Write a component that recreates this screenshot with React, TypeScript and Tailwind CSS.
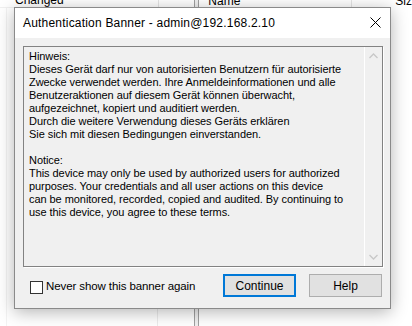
export default function App() {
  const hinweis = [
    "Hinweis:",
    "Dieses Gerät darf nur von autorisierten Benutzern für autorisierte",
    "Zwecke verwendet werden. Ihre Anmeldeinformationen und alle",
    "Benutzeraktionen auf diesem Gerät können überwacht,",
    "aufgezeichnet, kopiert und auditiert werden.",
    "Durch die weitere Verwendung dieses Geräts erklären",
    "Sie sich mit diesen Bedingungen einverstanden.",
    "",
    "Notice:",
    "This device may only be used by authorized users for authorized",
    "purposes. Your credentials and all user actions on this device",
    "can be monitored, recorded, copied and audited. By continuing to",
    "use this device, you agree to these terms.",
  ];

  return (
    <div className="relative w-[412px] h-[326px] overflow-hidden bg-white font-['Liberation_Sans',sans-serif] text-black">
      {/* Background file panels */}
      <div className="flex h-full">
        {/* Left panel */}
        <div className="w-[199px] h-full flex flex-col">
          <div className="flex h-[8px] items-end border-b border-[#f0f0f0] text-[12px] leading-none">
            <div className="w-[159px] h-full border-r border-[#e5e5e5] pl-[15px] pb-[1px] flex items-end">
              Changed
            </div>
            <div className="flex-1"></div>
          </div>
          <div className="flex-1 flex">
            <div className="w-[7px] border-r border-[#f3f3f3]"></div>
            <div className="w-[151px] border-r border-[#ececec]"></div>
          </div>
        </div>
        {/* Splitter */}
        <div className="w-[5px] h-full bg-[#f0f0f0] border-l border-r border-[#a0a0a0]"></div>
        {/* Right panel */}
        <div className="flex-1 h-full flex flex-col">
          <div className="flex h-[8px] text-[12px] leading-none">
            <div className="w-[153px] h-full border-r border-[#e5e5e5] pl-[9px] pb-[1px] flex items-end">
              Name
            </div>
            <div className="flex-1 pl-[43px] pb-[1px] flex items-end">Siz</div>
          </div>
          <div className="flex-1"></div>
        </div>
      </div>

      {/* Dialog */}
      <div className="absolute left-[14px] top-[7px] w-[377px] h-[302px] border border-[#8a8a8a] bg-[#f0f0f0] flex flex-col shadow-[0_3px_16px_rgba(0,0,0,0.3)]">
        {/* Title bar */}
        <div className="h-[30px] bg-white flex items-center justify-between pl-[8px] pr-[9px]">
          <span className="text-[12px] tracking-[0.2px]">
            Authentication Banner - admin@192.168.2.10
          </span>
          <svg width="11" height="11" viewBox="0 0 11 11" className="mt-[-1px]">
            <path d="M0.5 0.5 L10.5 10.5 M10.5 0.5 L0.5 10.5" stroke="#000" strokeWidth="1" />
          </svg>
        </div>

        {/* Body */}
        <div className="flex-1 flex flex-col pl-[8px] pr-[7px] pt-[8px]">
          {/* Banner text box */}
          <div className="h-[221px] border border-[#828282] shadow-[1px_1px_0_#ffffff] flex">
            <div className="flex-1 pl-[5px] pt-[3px] text-[11px] leading-[13px] tracking-[-0.06px] whitespace-pre">
              {hinweis.map((line, i) => (
                <div key={i} className="h-[13px]">
                  {line}
                </div>
              ))}
            </div>
            <div className="w-[18px] border-l border-white flex flex-col items-center justify-between py-[6px]">
              <svg width="9" height="6" viewBox="0 0 9 6">
                <path d="M0.5 5 L4.5 1 L8.5 5" stroke="#c8c8c8" strokeWidth="1.3" fill="none" />
              </svg>
              <svg width="9" height="6" viewBox="0 0 9 6">
                <path d="M0.5 1 L4.5 5 L8.5 1" stroke="#c8c8c8" strokeWidth="1.3" fill="none" />
              </svg>
            </div>
          </div>

          {/* Bottom row */}
          <div className="flex items-center mt-[7px] h-[23px]">
            <label className="flex items-center ml-[7px] text-[11px] mt-[3px]">
              <span className="w-[13px] h-[13px] border border-[#333333] bg-white"></span>
              <span className="ml-[3px] text-[11.5px] tracking-[-0.1px]">Never show this banner again</span>
            </label>
            <div className="flex-1"></div>
            <button className="w-[73px] h-[23px] border-2 border-[#0078d7] bg-[#e1e1e1] text-[12px]">
              Continue
            </button>
            <button className="w-[73px] h-[23px] ml-[13px] mr-[1px] border border-[#adadad] bg-[#e1e1e1] text-[12px]">
              Help
            </button>
          </div>
        </div>
      </div>
    </div>
  );
}
